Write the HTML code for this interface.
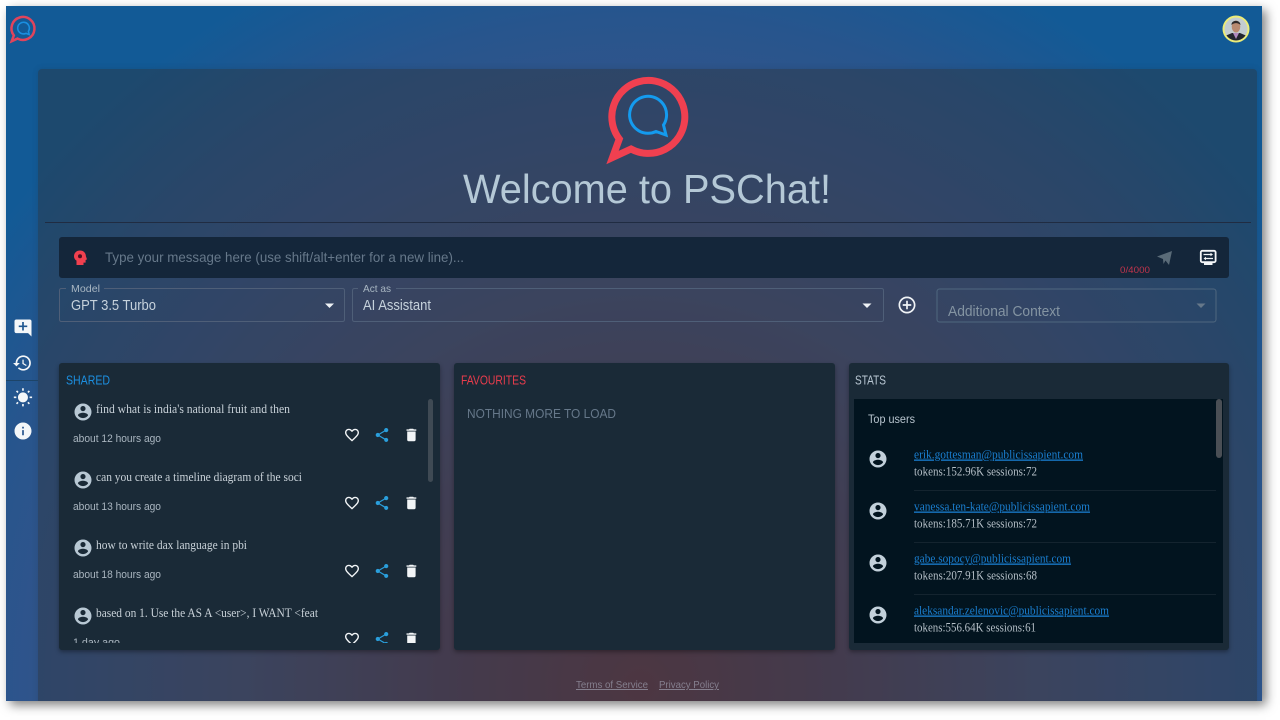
<!DOCTYPE html>
<html lang="en">
<head>
<meta charset="utf-8">
<title>PSChat</title>
<style>
html,body{margin:0;padding:0;width:1280px;height:720px;overflow:hidden;background:#fff;font-family:"Liberation Sans",sans-serif}
.abs{position:absolute;box-sizing:border-box}
#frame{left:6px;top:6px;width:1256px;height:695px;background:radial-gradient(circle 790px at 634px 680px,#633a4a 0%,#55415c 22%,#46517a 50%,#34548a 72%,#27558d 85%,#125a96 100%);box-shadow:4px 4px 10px rgba(0,0,0,.5);overflow:hidden}
#main{left:32px;top:63px;width:1219px;height:640px;background:rgba(45,50,55,.42);border-radius:4px 4px 0 0;box-shadow:0 0 6px rgba(30,50,70,.25)}
.card{background:#1a2a37;border-radius:3px;box-shadow:0 2px 4px rgba(0,0,0,.35)}
svg{position:absolute;left:0;top:0;filter:blur(.3px)}
.sans{font-family:"Liberation Sans",sans-serif}
.ser{font-family:"Liberation Serif",serif}
</style>
</head>
<body>
<div id="frame" class="abs"><div id="main" class="abs"></div></div>
<div class="abs" style="left:45px;top:222px;width:1206px;height:1px;background:#202c42"></div>
<div class="abs" style="left:59px;top:237px;width:1170px;height:41px;background:#14263a;border-radius:3px"></div>
<div class="abs card" style="left:59px;top:363px;width:381px;height:287px"></div>
<div class="abs card" style="left:454px;top:363px;width:381px;height:287px"></div>
<div class="abs card" style="left:849px;top:363px;width:380px;height:287px"></div>
<div class="abs" style="left:854px;top:399px;width:369px;height:244px;background:#02141f"></div>

<svg width="1280" height="720" viewBox="0 0 1280 720" xmlns="http://www.w3.org/2000/svg">
<defs>
<path id="acct" d="M12 2C6.48 2 2 6.48 2 12s4.48 10 10 10 10-4.48 10-10S17.52 2 12 2zm0 3c1.66 0 3 1.34 3 3s-1.34 3-3 3-3-1.34-3-3 1.34-3 3-3zm0 14.2c-2.5 0-4.71-1.28-6-3.22.03-1.99 4-3.08 6-3.08 1.99 0 5.97 1.09 6 3.08-1.29 1.94-3.5 3.22-6 3.22z"/>
<path id="heart" d="M16.5 3c-1.74 0-3.41.81-4.5 2.09C10.91 3.81 9.24 3 7.5 3 4.42 3 2 5.42 2 8.5c0 3.78 3.4 6.86 8.55 11.54L12 21.35l1.45-1.32C18.6 15.36 22 12.28 22 8.5 22 5.42 19.58 3 16.5 3zm-4.4 15.55l-.1.1-.1-.1C7.14 14.24 4 11.39 4 8.5 4 6.5 5.5 5 7.5 5c1.54 0 3.04.99 3.57 2.36h1.87C13.46 5.99 14.96 5 16.5 5c2 0 3.5 1.5 3.5 3.5 0 2.89-3.14 5.74-7.9 10.05z"/>
<path id="share" d="M18 16.08c-.76 0-1.44.3-1.96.77L8.91 12.7c.05-.23.09-.46.09-.7s-.04-.47-.09-.7l7.05-4.11c.54.5 1.25.81 2.04.81 1.66 0 3-1.34 3-3s-1.34-3-3-3-3 1.34-3 3c0 .24.04.47.09.7L8.04 9.81C7.5 9.31 6.79 9 6 9c-1.66 0-3 1.34-3 3s1.34 3 3 3c.79 0 1.5-.31 2.04-.81l7.12 4.16c-.05.21-.08.43-.08.65 0 1.61 1.31 2.92 2.92 2.92 1.61 0 2.92-1.31 2.92-2.92s-1.31-2.92-2.92-2.92z"/>
<path id="trash" d="M6 19c0 1.1.9 2 2 2h8c1.1 0 2-.9 2-2V7H6v12zM19 4h-3.5l-1-1h-5l-1 1H5v2h14V4z"/>
<clipPath id="listclip"><rect x="59" y="395" width="381" height="248"/></clipPath>
<g id="actions">
<use href="#heart" fill="#f2f5f7" transform="translate(343.6,426.6) scale(.7)"/>
<use href="#share" fill="#2a9fdc" transform="translate(373.6,426.6) scale(.7)"/>
<use href="#trash" fill="#f2f5f7" transform="translate(403,426.6) scale(.7)"/>
<use href="#acct" fill="#b8c8d4" transform="translate(72.8,401.8) scale(.85)"/>
</g>
</defs>

<!-- small logo -->
<g transform="translate(23.5,28.8) scale(.315) translate(-648,-117)" fill="none">
<path d="M617.3,138 L610.5,156.5 L629,148 A36.5,36.5 0 1 0 617.3,138 Z" stroke="#e0445c" stroke-width="8"/>
<path d="M663.5,125 L666,135 L656,131.5 A18.5,18.5 0 1 1 663.5,125 Z" stroke="#1a8fe0" stroke-width="5"/>
</g>

<!-- avatar -->
<clipPath id="avc"><circle cx="1236" cy="29" r="11.5"/></clipPath>
<circle cx="1236" cy="29" r="13.5" fill="#ecec78"/>
<g clip-path="url(#avc)">
<rect x="1222" y="15" width="28" height="28" fill="#c3ccd0"/>
<path d="M1224,42 L1225,36 L1232,33 L1240,33 L1247,36 L1248,42 Z" fill="#23262f"/>
<path d="M1233,33 L1236,39 L1239,33 Z" fill="#b08ac0"/>
<ellipse cx="1236" cy="26.5" rx="4.3" ry="6" fill="#b98a70"/>
<path d="M1231.5,25 C1231,19.5 1240.5,19.5 1240.5,25 C1238,22.5 1234,22.5 1231.5,25 Z" fill="#2e2a2a"/>
</g>

<!-- big logo -->
<g fill="none">
<path transform="translate(2,1)" d="M617.3,138 L610.5,156.5 L629,148 A36.5,36.5 0 1 0 617.3,138 Z" stroke="#f04050" stroke-width="7"/>
<path d="M663.5,125 L666,135 L656,131.5 A18.5,18.5 0 1 1 663.5,125 Z" stroke="#149bef" stroke-width="3"/>
</g>
<text class="sans" x="463" y="203" font-size="41" fill="#b4c8d6" textLength="368" lengthAdjust="spacingAndGlyphs">Welcome to PSChat!</text>

<!-- sidebar -->
<rect x="6" y="380" width="32" height="1" fill="#1d4468"/>
<path fill="#f4f7f9" transform="translate(12.8,317.8) scale(.85)" d="M22 4c0-1.1-.9-2-2-2H4c-1.1 0-2 .9-2 2v12c0 1.1.9 2 2 2h14l4 4V4zm-5 7h-4v4h-2v-4H7V9h4V5h2v4h4v2z"/>
<path fill="#f4f7f9" transform="translate(12.2,352.8) scale(.85)" d="M13 3c-4.97 0-9 4.03-9 9H1l3.89 3.89.07.14L9 12H6c0-3.87 3.13-7 7-7s7 3.13 7 7-3.13 7-7 7c-1.93 0-3.68-.79-4.94-2.06l-1.42 1.42C8.27 19.99 10.51 21 13 21c4.97 0 9-4.03 9-9s-4.03-9-9-9zm-1 5v5l4.28 2.54.72-1.21-3.5-2.08V8H12z"/>
<path fill="#f4f7f9" transform="translate(13,387.8) scale(.83)" d="M6.76 4.84l-1.8-1.79-1.41 1.41 1.79 1.79 1.42-1.41zM4 10.5H1v2h3v-2zm9-9.95h-2V3.5h2V.55zm7.45 3.91l-1.41-1.41-1.79 1.79 1.41 1.41 1.79-1.79zm-3.21 13.7l1.79 1.8 1.41-1.41-1.8-1.79-1.4 1.4zM20 10.5v2h3v-2h-3zm-8-5c-3.31 0-6 2.69-6 6s2.69 6 6 6 6-2.69 6-6-2.69-6-6-6zm-1 16.95h2V19.5h-2v2.95zm-7.45-3.91l1.41 1.41 1.79-1.8-1.41-1.41-1.79 1.8z"/>
<path fill="#f4f7f9" transform="translate(12.8,420.8) scale(.85)" d="M12 2C6.48 2 2 6.48 2 12s4.48 10 10 10 10-4.48 10-10S17.52 2 12 2zm1 15h-2v-6h2v6zm0-8h-2V7h2v2z"/>

<!-- input bar -->
<path fill="#f0404f" d="M80,250.5 C76.5,250.5 74,253 74,256.2 C74,258.2 75,259.6 76.5,260.6 L76.5,265 L83.5,265 L83.5,262.6 L85.6,262.6 L85.6,260 L87,259.4 L85.9,256.2 C85.9,253 83.5,250.5 80,250.5 Z"/>
<circle cx="80" cy="256.3" r="2" fill="#4a1020"/>
<text class="sans" x="105" y="262" font-size="14" fill="#66788a" textLength="359" lengthAdjust="spacingAndGlyphs">Type your message here (use shift/alt+enter for a new line)...</text>
<text class="sans" x="1120" y="273" font-size="9" fill="#c0344c" textLength="30" lengthAdjust="spacingAndGlyphs">0/4000</text>
<path fill="#5a6b78" d="M1157,256.5 L1172,251 L1169,265 L1165.5,260.5 L1163.5,264 L1163,259 Z"/>
<rect x="1200.8" y="250.8" width="14.8" height="11.4" rx="1.5" fill="none" stroke="#f5f7f9" stroke-width="1.8"/>
<rect x="1204" y="263" width="8.5" height="2" fill="#f2f5f7"/>
<path d="M1203.5,254.5 H1211 M1205,258.5 H1213" stroke="#f2f5f7" stroke-width="1.2" fill="none"/>
<path d="M1210.5,252.8 L1213,254.5 L1210.5,256.2 Z M1206,256.8 L1203.5,258.5 L1206,260.2 Z" fill="#f2f5f7"/>

<!-- selects -->
<path d="M66,288.5 H61.5 Q59.5,288.5 59.5,290.5 V319.5 Q59.5,321.5 61.5,321.5 H342.5 Q344.5,321.5 344.5,319.5 V290.5 Q344.5,288.5 342.5,288.5 H104" fill="none" stroke="#4f5f78" stroke-width="1"/>
<path d="M358,288.5 H354.5 Q352.5,288.5 352.5,290.5 V319.5 Q352.5,321.5 354.5,321.5 H881.5 Q883.5,321.5 883.5,319.5 V290.5 Q883.5,288.5 881.5,288.5 H396" fill="none" stroke="#4f5f78" stroke-width="1"/>
<rect x="937" y="289" width="279" height="33" rx="2.5" fill="none" stroke="#4f677f" stroke-width="1"/>
<text class="sans" x="71" y="292" font-size="10.5" fill="#a8b6c2" textLength="29" lengthAdjust="spacingAndGlyphs">Model</text>
<text class="sans" x="71" y="310" font-size="14.5" fill="#c6d2dc" textLength="85" lengthAdjust="spacingAndGlyphs">GPT 3.5 Turbo</text>
<path d="M325,303.5 H334 L329.5,308 Z" fill="#eef2f5"/>
<text class="sans" x="363" y="292" font-size="10.5" fill="#a8b6c2" textLength="28" lengthAdjust="spacingAndGlyphs">Act as</text>
<text class="sans" x="363" y="310" font-size="14.5" fill="#c6d2dc" textLength="68" lengthAdjust="spacingAndGlyphs">AI Assistant</text>
<path d="M862.5,303.5 H871.5 L867,308 Z" fill="#eef2f5"/>
<path fill="#f0f3f6" transform="translate(896.8,294.8) scale(.85)" d="M13 7h-2v4H7v2h4v4h2v-4h4v-2h-4V7zm-1-5C6.48 2 2 6.48 2 12s4.48 10 10 10 10-4.48 10-10S17.52 2 12 2zm0 18c-4.41 0-8-3.59-8-8s3.59-8 8-8 8 3.59 8 8-3.59 8-8 8z"/>
<text class="sans" x="948" y="316" font-size="14.5" fill="#8494a2" textLength="112" lengthAdjust="spacingAndGlyphs">Additional Context</text>
<path d="M1196.5,303.5 H1205.5 L1201,308 Z" fill="#66788a"/>

<!-- card headers -->
<text class="sans" x="66" y="384.5" font-size="13" fill="#1c8fe0" textLength="44" lengthAdjust="spacingAndGlyphs">SHARED</text>
<text class="sans" x="461" y="384.5" font-size="13" fill="#e83c4c" textLength="65" lengthAdjust="spacingAndGlyphs">FAVOURITES</text>
<text class="sans" x="855" y="384.5" font-size="13" fill="#b8c6d2" textLength="31" lengthAdjust="spacingAndGlyphs">STATS</text>
<text class="sans" x="467" y="418" font-size="13" fill="#66788a" textLength="149" lengthAdjust="spacingAndGlyphs">NOTHING MORE TO LOAD</text>

<!-- shared list -->
<g clip-path="url(#listclip)">
<use href="#actions"/>
<text class="ser" x="96" y="413" font-size="12.5" fill="#c8d1d8" textLength="194" lengthAdjust="spacingAndGlyphs">find what is india's national fruit and then</text>
<text class="sans" x="73" y="442" font-size="11" fill="#aab6c0" textLength="88" lengthAdjust="spacingAndGlyphs">about 12 hours ago</text>
<use href="#actions" y="68"/>
<text class="ser" x="96" y="481" font-size="12.5" fill="#c8d1d8" textLength="206" lengthAdjust="spacingAndGlyphs">can you create a timeline diagram of the soci</text>
<text class="sans" x="73" y="510" font-size="11" fill="#aab6c0" textLength="88" lengthAdjust="spacingAndGlyphs">about 13 hours ago</text>
<use href="#actions" y="136"/>
<text class="ser" x="96" y="549" font-size="12.5" fill="#c8d1d8" textLength="151" lengthAdjust="spacingAndGlyphs">how to write dax language in pbi</text>
<text class="sans" x="73" y="578" font-size="11" fill="#aab6c0" textLength="88" lengthAdjust="spacingAndGlyphs">about 18 hours ago</text>
<use href="#actions" y="204"/>
<text class="ser" x="96" y="617" font-size="12.5" fill="#c8d1d8" textLength="222" lengthAdjust="spacingAndGlyphs">based on 1. Use the AS A &lt;user&gt;, I WANT &lt;feat</text>
<text class="sans" x="73" y="646" font-size="11" fill="#aab6c0" textLength="47" lengthAdjust="spacingAndGlyphs">1 day ago</text>
</g>
<rect x="428" y="399" width="5" height="83" rx="2.5" fill="#3f4a54"/>

<!-- stats list -->
<text class="sans" x="868" y="423" font-size="12" fill="#b8c4ce" textLength="47" lengthAdjust="spacingAndGlyphs">Top users</text>
<rect x="1216" y="399" width="6" height="59" rx="3" fill="#4a4f55"/>
<use href="#acct" fill="#c2d0da" transform="translate(867.8,448.8) scale(.85)"/>
<use href="#acct" fill="#c2d0da" transform="translate(867.8,500.8) scale(.85)"/>
<use href="#acct" fill="#c2d0da" transform="translate(867.8,552.8) scale(.85)"/>
<use href="#acct" fill="#c2d0da" transform="translate(867.8,604.8) scale(.85)"/>
<g class="ser" font-size="13">
<text x="914" y="458.5" fill="#1a7ecf" text-decoration="underline" textLength="169" lengthAdjust="spacingAndGlyphs">erik.gottesman@publicissapient.com</text>
<text x="914" y="475.5" fill="#b4bec6" textLength="123" lengthAdjust="spacingAndGlyphs">tokens:152.96K sessions:72</text>
<text x="914" y="510.5" fill="#1a7ecf" text-decoration="underline" textLength="176" lengthAdjust="spacingAndGlyphs">vanessa.ten-kate@publicissapient.com</text>
<text x="914" y="527.5" fill="#b4bec6" textLength="123" lengthAdjust="spacingAndGlyphs">tokens:185.71K sessions:72</text>
<text x="914" y="562.5" fill="#1a7ecf" text-decoration="underline" textLength="157" lengthAdjust="spacingAndGlyphs">gabe.sopocy@publicissapient.com</text>
<text x="914" y="579.5" fill="#b4bec6" textLength="123" lengthAdjust="spacingAndGlyphs">tokens:207.91K sessions:68</text>
<text x="914" y="614.5" fill="#1a7ecf" text-decoration="underline" textLength="195" lengthAdjust="spacingAndGlyphs">aleksandar.zelenovic@publicissapient.com</text>
<text x="914" y="631.5" fill="#b4bec6" textLength="122" lengthAdjust="spacingAndGlyphs">tokens:556.64K sessions:61</text>
</g>
<rect x="914" y="490" width="302" height="1" fill="#14242f"/>
<rect x="914" y="542" width="302" height="1" fill="#14242f"/>
<rect x="914" y="594" width="302" height="1" fill="#14242f"/>

<!-- footer -->
<text class="sans" x="576" y="688" font-size="10" fill="#857f8e" text-decoration="underline" textLength="72" lengthAdjust="spacingAndGlyphs">Terms of Service</text>
<text class="sans" x="659" y="688" font-size="10" fill="#857f8e" text-decoration="underline" textLength="60" lengthAdjust="spacingAndGlyphs">Privacy Policy</text>
</svg>
</body>
</html>
